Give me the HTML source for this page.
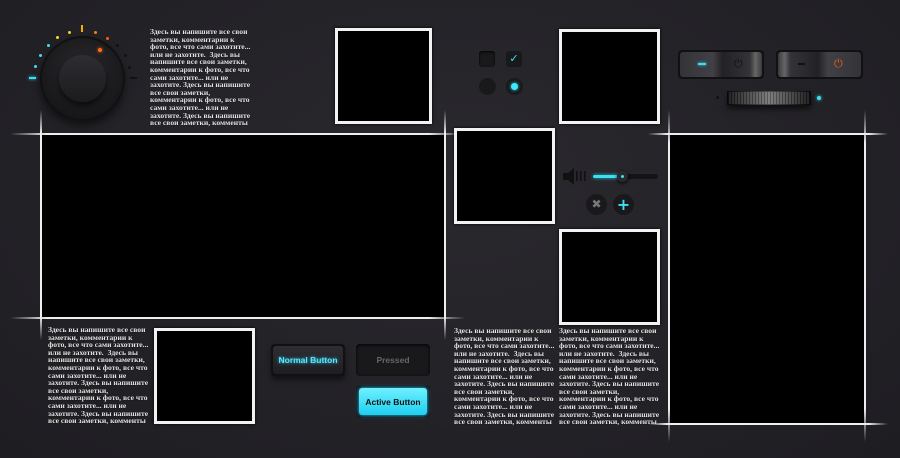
<!DOCTYPE html>
<html><head><meta charset="utf-8"><style>
*{margin:0;padding:0;box-sizing:border-box}
body{width:900px;height:458px;overflow:hidden;background:radial-gradient(ellipse at 50% 40%,#2a292e 0%,#232227 60%,#1e1d22 100%);position:relative;font-family:"Liberation Serif",serif}
.a{position:absolute}
.blk{position:absolute;background:#000}
.box{position:absolute;background:#000;border:3px solid #f2f2f2;box-shadow:0 0 3px #000}
.hl{position:absolute;height:2px;background:linear-gradient(90deg,rgba(255,255,255,0),#eee 8%,#eee 92%,rgba(255,255,255,0))}
.vl{position:absolute;width:2px;background:linear-gradient(180deg,rgba(255,255,255,0),#eee 10%,#eee 90%,rgba(255,255,255,0))}
.t{position:absolute;color:#e4e4e4;font-size:7.6px;font-weight:bold;line-height:7.6px;white-space:nowrap;text-shadow:0 0 1px #000}
.d{position:absolute;width:4px;height:4px;border-radius:50%}
.btn{position:absolute;border-radius:4px;font-family:"Liberation Sans",sans-serif;font-weight:bold;font-size:8.5px;display:flex;align-items:center;justify-content:center}
</style></head><body>

<div class="blk" style="left:41px;top:134px;width:404px;height:184px"></div>
<div class="blk" style="left:669px;top:134px;width:197px;height:291px"></div>
<div class="hl" style="left:10px;top:133px;width:455px"></div>
<div class="hl" style="left:10px;top:317px;width:455px"></div>
<div class="vl" style="left:40px;top:110px;height:230px"></div>
<div class="vl" style="left:444px;top:110px;height:230px"></div>
<div class="hl" style="left:648px;top:133px;width:240px"></div>
<div class="hl" style="left:648px;top:423px;width:240px"></div>
<div class="vl" style="left:668px;top:110px;height:332px"></div>
<div class="vl" style="left:864px;top:110px;height:332px"></div>

<div class="box" style="left:335px;top:28px;width:97px;height:96px"></div>
<div class="box" style="left:559px;top:29px;width:101px;height:95px"></div>
<div class="box" style="left:454px;top:128px;width:101px;height:96px"></div>
<div class="box" style="left:559px;top:229px;width:101px;height:96px"></div>
<div class="box" style="left:154px;top:328px;width:101px;height:96px"></div>

<div class="t" style="left:150px;top:28px">Здесь вы напишите все свои<br>заметки, комментарии к<br>фото, все что сами захотите...<br>или не захотите.&nbsp; Здесь вы<br>напишите все свои заметки,<br>комментарии к фото, все что<br>сами захотите... или не<br>захотите. Здесь вы напишите<br>все свои заметки,<br>комментарии к фото, все что<br>сами захотите... или не<br>захотите. Здесь вы напишите<br>все свои заметки, комменты</div>
<div class="t" style="left:48px;top:326px">Здесь вы напишите все свои<br>заметки, комментарии к<br>фото, все что сами захотите...<br>или не захотите.&nbsp; Здесь вы<br>напишите все свои заметки,<br>комментарии к фото, все что<br>сами захотите... или не<br>захотите. Здесь вы напишите<br>все свои заметки,<br>комментарии к фото, все что<br>сами захотите... или не<br>захотите. Здесь вы напишите<br>все свои заметки, комменты</div>
<div class="t" style="left:454px;top:327px">Здесь вы напишите все свои<br>заметки, комментарии к<br>фото, все что сами захотите...<br>или не захотите.&nbsp; Здесь вы<br>напишите все свои заметки,<br>комментарии к фото, все что<br>сами захотите... или не<br>захотите. Здесь вы напишите<br>все свои заметки,<br>комментарии к фото, все что<br>сами захотите... или не<br>захотите. Здесь вы напишите<br>все свои заметки, комменты</div>
<div class="t" style="left:559px;top:327px">Здесь вы напишите все свои<br>заметки, комментарии к<br>фото, все что сами захотите...<br>или не захотите.&nbsp; Здесь вы<br>напишите все свои заметки,<br>комментарии к фото, все что<br>сами захотите... или не<br>захотите. Здесь вы напишите<br>все свои заметки,<br>комментарии к фото, все что<br>сами захотите... или не<br>захотите. Здесь вы напишите<br>все свои заметки, комменты</div>

<div class="a" style="left:40px;top:36px;width:85px;height:85px;border-radius:50%;background:radial-gradient(circle at 50% 40%,#2a2a2e,#17171a 70%);box-shadow:0 5px 8px rgba(0,0,0,.5),inset 0 0 0 2px #111"></div>
<div class="a" style="left:59px;top:55px;width:47px;height:47px;border-radius:50%;background:linear-gradient(180deg,#2e2e32,#1b1b1e);box-shadow:0 4px 6px rgba(0,0,0,.6)"></div>
<div class="d" style="left:98px;top:48px;background:#ff6a1a;box-shadow:0 0 3px #f60"></div>
<div class="a" style="left:29px;top:77px;width:7px;height:2px;background:#3de0f0;box-shadow:0 0 3px #3df"></div>
<div class="d" style="left:34px;top:65px;width:3px;height:3px;background:#3de0f0"></div>
<div class="d" style="left:39px;top:54px;width:3px;height:3px;background:#3de0f0"></div>
<div class="d" style="left:47px;top:44px;width:3px;height:3px;background:#3de0f0"></div>
<div class="d" style="left:56px;top:36px;width:3px;height:3px;background:#f0e020"></div>
<div class="d" style="left:68px;top:31px;width:3px;height:3px;background:#f0d020"></div>
<div class="a" style="left:81px;top:25px;width:2px;height:7px;background:#f0b000"></div>
<div class="d" style="left:94px;top:31px;width:3px;height:3px;background:#ff7a10"></div>
<div class="d" style="left:106px;top:37px;width:3px;height:3px;background:#ff5a10"></div>
<div class="d" style="left:116px;top:44px;width:3px;height:3px;background:#111"></div>
<div class="d" style="left:124px;top:54px;width:3px;height:3px;background:#111"></div>
<div class="d" style="left:128px;top:66px;width:3px;height:3px;background:#111"></div>
<div class="a" style="left:130px;top:77px;width:7px;height:2px;background:#111"></div>

<div class="a" style="left:479px;top:51px;width:16px;height:16px;border-radius:3px;background:#19191c;box-shadow:inset 0 1px 2px #000"></div>
<div class="a" style="left:506px;top:51px;width:16px;height:16px;border-radius:3px;background:#19191c;color:#3de0f0;font:bold 11px 'DejaVu Sans';text-align:center;line-height:16px">✓</div>
<div class="a" style="left:479px;top:78px;width:17px;height:17px;border-radius:50%;background:#19191c"></div>
<div class="a" style="left:506px;top:78px;width:17px;height:17px;border-radius:50%;background:#19191c"></div>
<div class="d" style="left:511px;top:83px;width:7px;height:7px;background:#3de8f8;box-shadow:0 0 3px #3df"></div>

<div class="a" style="left:678px;top:50px;width:86px;height:29px;border-radius:4px;background:#111;padding:2px"><div style="width:100%;height:100%;border-radius:3px;background:linear-gradient(90deg,#333338,#404046 40%,#222226 52%,#333338 85%,#666 92%,#3a3a3e);position:relative">
<div class="a" style="left:18px;top:11px;width:8px;height:2px;background:#3de0f0;box-shadow:0 0 3px #3df"></div>
<div class="a" style="left:54px;top:5px;font:11px 'DejaVu Sans';color:#111">⏻</div></div></div>
<div class="a" style="left:776px;top:50px;width:87px;height:29px;border-radius:4px;background:#111;padding:2px"><div style="width:100%;height:100%;border-radius:3px;background:linear-gradient(90deg,#3a3a3e,#666 8%,#333338 15%,#222226 48%,#404046 60%,#333338);position:relative">
<div class="a" style="left:20px;top:11px;width:7px;height:2px;background:#111"></div>
<div class="a" style="left:56px;top:5px;font:11px 'DejaVu Sans';color:#f06010">⏻</div></div></div>
<div class="d" style="left:716px;top:96px;width:3px;height:3px;background:#111"></div>
<div class="a" style="left:727px;top:91px;width:84px;height:14px;border-radius:2px;background:repeating-linear-gradient(90deg,#222 0 1px,#555 1px 3px),#333;box-shadow:0 4px 6px rgba(0,0,0,.6);border:1px solid #111"></div>
<div class="a" style="left:727px;top:91px;width:84px;height:14px;background:linear-gradient(90deg,rgba(0,0,0,.6),rgba(255,255,255,.25) 50%,rgba(0,0,0,.6))"></div>
<div class="d" style="left:817px;top:96px;background:#3de0f0;box-shadow:0 0 3px #3df"></div>

<svg class="a" style="left:561px;top:168px" width="26" height="17"><path d="M2 5h5l6-5v17l-6-5H2z" fill="#111"/><rect x="15" y="3" width="1.6" height="10" fill="#111"/><rect x="19" y="3" width="1.6" height="10" fill="#111"/><rect x="23" y="3" width="1.6" height="10" fill="#111"/></svg>
<div class="a" style="left:592px;top:174px;width:66px;height:5px;border-radius:3px;background:#141416"></div>
<div class="a" style="left:593px;top:175px;width:30px;height:3px;border-radius:2px;background:#3de0f0;box-shadow:0 0 3px #3df"></div>
<div class="a" style="left:617px;top:171px;width:11px;height:11px;border-radius:50%;background:#2a2a2e;box-shadow:0 1px 3px #000"></div>
<div class="d" style="left:621px;top:175px;width:3px;height:3px;background:#3de0f0"></div>
<div class="a" style="left:586px;top:194px;width:21px;height:21px;border-radius:50%;background:#19191c;color:#777;font:bold 12px 'DejaVu Sans';text-align:center;line-height:21px">✖</div>
<div class="a" style="left:613px;top:194px;width:21px;height:21px;border-radius:50%;background:#19191c;color:#3de0f0;font:bold 16px 'DejaVu Sans';text-align:center;line-height:21px">+</div>

<div class="btn" style="left:271px;top:344px;width:74px;height:32px;background:#111;padding:2px;box-shadow:0 4px 6px rgba(0,0,0,.5)"><div style="width:100%;height:100%;border-radius:3px;background:linear-gradient(#2e2e33,#1e1e22);color:#5ee4f4;display:flex;align-items:center;justify-content:center;text-shadow:0 0 3px #2cf">Normal Button</div></div>
<div class="btn" style="left:356px;top:344px;width:74px;height:32px;background:#19191c;color:#666;box-shadow:inset 0 1px 3px #000">Pressed</div>
<div class="btn" style="left:356px;top:385px;width:74px;height:33px;background:#151517;padding:3px"><div style="width:100%;height:100%;border-radius:3px;background:linear-gradient(#6ff0ff,#1dd0f0);color:#111;display:flex;align-items:center;justify-content:center;box-shadow:0 0 4px #2cf">Active Button</div></div>
</body></html>
